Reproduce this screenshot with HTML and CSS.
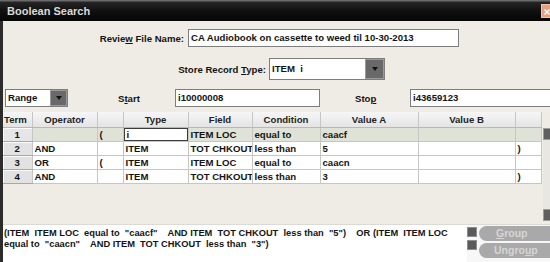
FILE: index.html
```html
<!DOCTYPE html>
<html>
<head>
<meta charset="utf-8">
<link rel="stylesheet" href="styles.css">
</head>
<body>
<div class="window">
  <div class="titlebar">
    <span class="title">Boolean Search</span>
    <span class="close"><svg width="12" height="14" viewBox="0 0 12 14"><path d="M3 4 L9 10 M9 4 L3 10" stroke="#fff" stroke-width="1.6"/></svg></span>
  </div>
  <div class="content">
    <div class="row row-file">
      <span class="lbl lbl-file">Revie<u>w</u> File Name:</span>
      <div class="field field-file">CA Audiobook on cassette to weed til 10-30-2013</div>
    </div>
    <div class="row row-type">
      <span class="lbl lbl-type">Store Record <u>T</u>ype:</span>
      <div class="combo combo-type">
        <div class="combo-text">ITEM&nbsp; i</div>
        <div class="combo-btn"><span class="tri"></span></div>
      </div>
    </div>
    <div class="row row-range">
      <div class="combo combo-range">
        <div class="combo-text">Range</div>
        <div class="combo-btn"><span class="tri"></span></div>
      </div>
      <span class="lbl lbl-start">S<u>t</u>art</span>
      <div class="field field-start">i10000008</div>
      <span class="lbl lbl-stop">Sto<u>p</u></span>
      <div class="field field-stop">i43659123</div>
    </div>
    <div class="grid-area">
      <table class="grid">
        <colgroup>
          <col class="c-term"><col class="c-op"><col class="c-par"><col class="c-type"><col class="c-field"><col class="c-cond"><col class="c-va"><col class="c-vb"><col class="c-par2">
        </colgroup>
        <thead>
          <tr><th>Term</th><th>Operator</th><th></th><th>Type</th><th>Field</th><th>Condition</th><th>Value A</th><th>Value B</th><th></th></tr>
        </thead>
        <tbody>
          <tr class="sel"><td class="term">1</td><td></td><td>(</td><td class="edit"><div class="editbox">i</div></td><td>ITEM LOC</td><td>equal to</td><td>caacf</td><td></td><td></td></tr>
          <tr><td class="term">2</td><td>AND</td><td></td><td>ITEM</td><td>TOT CHKOUT</td><td>less than</td><td>5</td><td></td><td>)</td></tr>
          <tr><td class="term">3</td><td>OR</td><td>(</td><td>ITEM</td><td>ITEM LOC</td><td>equal to</td><td>caacn</td><td></td><td></td></tr>
          <tr><td class="term">4</td><td>AND</td><td></td><td>ITEM</td><td>TOT CHKOUT</td><td>less than</td><td>3</td><td></td><td>)</td></tr>
        </tbody>
      </table>
      <div class="vscroll">
        <span class="sq"></span>
        <span class="sq"></span>
      </div>
    </div>
    <div class="bottom">
      <div class="expr">(ITEM  ITEM LOC  equal to  "caacf"    AND ITEM  TOT CHKOUT  less than  "5")    OR (ITEM  ITEM LOC
equal to  "caacn"    AND ITEM  TOT CHKOUT  less than  "3")</div>
      <div class="mini">
        <span class="msq"></span>
        <span class="msq"></span>
      </div>
      <div class="buttons">
        <div class="btn btn-group"><u>G</u>roup</div>
        <div class="btn btn-ungroup">Ungro<u>u</u>p</div>
      </div>
    </div>
  </div>
</div>
</body>
</html>
```
FILE: styles.css
```css
html, body {
  margin: 0;
  padding: 0;
  overflow: hidden;
}
body {
  width: 550px;
  height: 262px;
  background: #efece5;
  font-family: "Liberation Sans", Arial, sans-serif;
  font-size: 9.6px;
  font-weight: bold;
  color: #141414;
}
.window {
  width: 560px;
  height: 262px;
  display: flex;
  flex-direction: column;
}
.titlebar {
  height: 21px;
  flex: none;
  box-sizing: border-box;
  display: flex;
  align-items: center;
  padding-left: 7px;
  background: linear-gradient(#6a6a6a 0, #6a6a6a 1px, #262626 2px, #111 50%, #050505 100%);
}
.title {
  color: #dadada;
  font-size: 11px;
}
.close {
  margin-left: auto;
  margin-right: 7px;
  width: 12px;
  height: 14px;
  background: #e2a184;
  border: 1px solid #f0c4ae;
  box-sizing: border-box;
  display: flex;
}
.content {
  flex: 1;
  border-left: 3px solid #2c2c2c;
  display: flex;
  flex-direction: column;
}
.row {
  display: flex;
  align-items: center;
}
.lbl u { text-decoration: underline; }
.field {
  background: #fff;
  border: 1px solid #7d7d7d;
  box-sizing: border-box;
  padding-left: 2px;
  white-space: nowrap;
  overflow: hidden;
}
.row-file {
  margin-top: 8px;
  height: 18px;
}
.lbl-file {
  width: 185px;
  padding-right: 4px;
  box-sizing: border-box;
  text-align: right;
}
.field-file {
  width: 271px;
  height: 18px;
  line-height: 16px;
}
.row-type {
  margin-top: 11px;
  height: 22px;
}
.lbl-type {
  width: 266px;
  padding-right: 3px;
  box-sizing: border-box;
  text-align: right;
}
.combo {
  display: flex;
  box-sizing: border-box;
  border: 1px solid #7d7d7d;
  background: #fff;
}
.combo-text {
  flex: 1;
  padding-left: 2px;
  white-space: nowrap;
}
.combo-btn {
  background: #696969;
  border: 1px solid #9a9a9a;
  box-sizing: border-box;
  display: flex;
  align-items: center;
  justify-content: center;
}
.tri {
  width: 0;
  height: 0;
  border-left: 3.5px solid transparent;
  border-right: 3.5px solid transparent;
  border-top: 4px solid #111;
}
.combo-type {
  width: 116px;
  height: 22px;
  line-height: 20px;
}
.combo-type .combo-btn { width: 19px; }
.row-range {
  margin-top: 9px;
  height: 18px;
}
.combo-range {
  margin-left: 2px;
  width: 63px;
  height: 18px;
  line-height: 16px;
}
.combo-range .combo-btn { width: 17px; }
.lbl-start {
  margin-left: 50px;
  width: 57px;
}
.field-start {
  width: 145px;
  height: 18px;
  line-height: 16px;
}
.lbl-stop {
  margin-left: 35px;
  width: 55px;
}
.field-stop {
  width: 150px;
  height: 18px;
  line-height: 16px;
}
.grid-area {
  margin-top: 5px;
  display: flex;
  align-items: flex-start;
}
.grid {
  width: 538px;
  table-layout: fixed;
  border-collapse: collapse;
  flex: none;
}
.c-term { width: 29px; }
.c-op { width: 65px; }
.c-par { width: 26px; }
.c-type { width: 65px; }
.c-field { width: 64px; }
.c-cond { width: 68px; }
.c-va { width: 98px; }
.c-vb { width: 97px; }
.c-par2 { width: 26px; }
.grid th {
  height: 15px;
  padding: 0;
  font-weight: bold;
  text-align: center;
  color: #222;
  background: linear-gradient(#f6f6f6, #e4e4e4);
  border-right: 1px solid #c6c6c6;
  border-bottom: 1px solid #b8b8b8;
}
.grid th:first-child { text-align: left; padding-left: 1px; }
.grid td {
  height: 13px;
  padding: 0 0 0 2px;
  background: #fff;
  border-right: 1px solid #c6c6c6;
  border-bottom: 1px solid #c6c6c6;
  white-space: nowrap;
  overflow: hidden;
  line-height: 13px;
}
.grid tr.sel td { background: #dfe2d6; }
.grid td.term {
  text-align: center;
  padding: 0;
  background: #e2e2e2;
  border-bottom: 1px solid #a8a8a8;
  box-shadow: inset 1px 1px 0 #fafafa;
}
.grid tr.sel td.term { background: #e6e6e6; }
.grid tr.sel td.edit {
  background: #fff;
  padding: 0;
}
.editbox {
  height: 13px;
  box-sizing: border-box;
  border: 1px solid #3c3c3c;
  line-height: 11px;
  padding-left: 2px;
  background: #fff;
}
.vscroll {
  margin-top: 16px;
  height: 93px;
  width: 12px;
  margin-left: 1px;
  flex: none;
  display: flex;
  flex-direction: column;
  justify-content: space-between;
  background: #e9e7e1;
}
.sq {
  width: 12px;
  height: 12px;
  box-sizing: border-box;
  background: #5f5f5f;
  border: 1px solid #9c9c9c;
}
.bottom {
  margin-top: auto;
  height: 38px;
  flex: none;
  display: flex;
  background: #f7f7f7;
  border-top: 1px solid #dcdad4;
  box-sizing: border-box;
}
.expr {
  width: 464px;
  flex: none;
  background: #fff;
  white-space: pre;
  font-size: 9.3px;
  line-height: 11px;
  padding: 3px 0 0 1px;
  box-sizing: border-box;
  overflow: hidden;
}
.mini {
  width: 11px;
  flex: none;
  padding-top: 2px;
  display: flex;
  flex-direction: column;
  gap: 3px;
}
.msq {
  width: 10px;
  height: 10px;
  box-sizing: border-box;
  background: #5a5a5a;
  border: 1px solid #8e8e8e;
}
.buttons {
  flex: none;
  width: 80px;
  margin-left: 1px;
  padding-top: 1px;
  display: flex;
  flex-direction: column;
  gap: 2px;
}
.btn {
  height: 15px;
  box-sizing: border-box;
  border-radius: 8px 0 0 8px;
  background: #a9a9a9;
  color: #d6d6d6;
  text-align: left;
  line-height: 15px;
  font-weight: bold;
  font-size: 10.5px;
  white-space: nowrap;
}
.btn-group { padding-left: 17px; }
.btn-ungroup { padding-left: 15px; }
```
